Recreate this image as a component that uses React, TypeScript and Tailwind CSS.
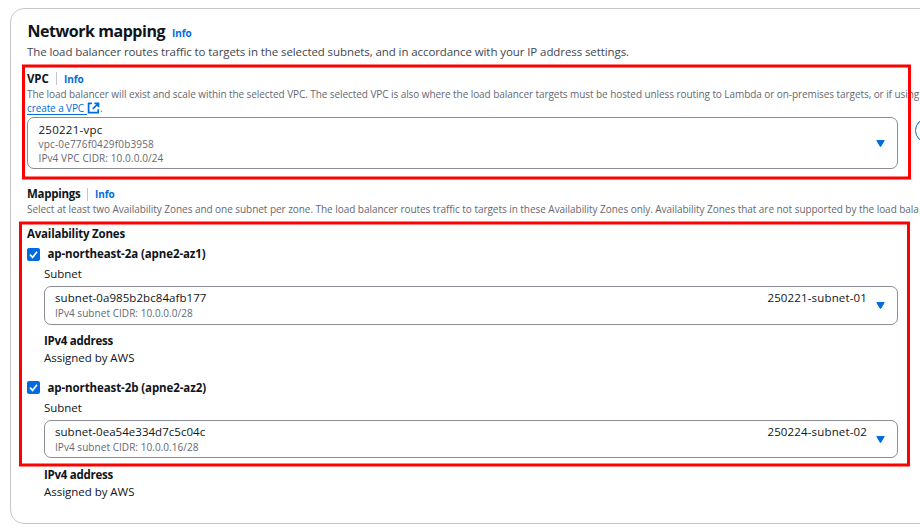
import type { ReactNode } from "react";

function Line({ h, className = "", children }: { h: string; className?: string; children: ReactNode }) {
  return <div className={`flex whitespace-nowrap ${h} ${className}`}>{children}</div>;
}

function Caret({ className = "" }: { className?: string }) {
  return (
    <svg className={`w-[9px] h-[7px] shrink-0 ${className}`} viewBox="0 0 9 7">
      <path d="M0.8 0.5h7.4L4.8 6.3h-0.6z" fill="#006ce0" stroke="#006ce0" strokeWidth="1" strokeLinejoin="round" />
    </svg>
  );
}

function Check({ className }: { className: string }) {
  return (
    <span className={`h-[13px] w-[13px] shrink-0 rounded-[2px] bg-[#006ce0] ${className}`}>
      <svg viewBox="0 0 13 13" className="h-[13px] w-[13px]">
        <path d="M3 6.6l2.6 2.8L10 3.8" fill="none" stroke="#fff" strokeWidth="1.7" />
      </svg>
    </span>
  );
}

function Info({ className = "" }: { className?: string }) {
  return (
    <span className={`text-[10px] font-bold tracking-[-0.1px] text-[#006ce0] ${className}`}>Info</span>
  );
}

function Highlight({ className }: { className: string }) {
  return (
    <div
      className={`pointer-events-none absolute border-x-[3px] border-y-2 border-[#ff0000] shadow-[0_1px_0_#ff000080,0_-1px_0_#ff000080,inset_0_1px_0_#ff000080,inset_0_-1px_0_#ff000080] ${className}`}
    />
  );
}

interface ZoneProps {
  name: string;
  subnet: string;
  cidr: string;
  label: string;
  check: string;
  box: string;
  subnetTracking: string;
}

function Zone({ name, subnet, cidr, label, check, box, subnetTracking }: ZoneProps) {
  return (
    <div>
      <Line h="h-[20px]">
        <Check className={check} />
        <span className="ml-[7.5px] text-[11.5px] leading-[14px] font-bold tracking-[-0.1px]">{name}</span>
      </Line>
      <div className="ml-[17px]">
        <Line h="h-[19px]" className="text-[11.5px] leading-[13px] tracking-[-0.02px]">Subnet</Line>
        <div className={`flex w-[854px] justify-between rounded-[7px] border border-[#8c8c94] ${box}`}>
          <div className="pt-[3px] pl-[10px]">
            <Line h="h-[15px]" className={`text-[11.5px] leading-[16px] ${subnetTracking}`}>{subnet}</Line>
            <Line h="h-[15px]" className="text-[10px] leading-[16px] tracking-[0.05px] text-[#656871]">{cidr}</Line>
          </div>
          <div className="flex pr-[12px]">
            <span className="pt-[3px] text-[11.5px] leading-[16px] tracking-[0.15px]">{label}</span>
            <Caret className="mt-[15px] ml-[9px]" />
          </div>
        </div>
        <Line h="h-[17px]" className="pt-[8px] box-content text-[11.5px] leading-[16px] font-bold tracking-[-0.26px]">IPv4 address</Line>
        <Line h="h-[17px]" className="text-[11.5px] leading-[16px] tracking-[-0.03px]">Assigned by AWS</Line>
      </div>
    </div>
  );
}

export default function App() {
  return (
    <div className="relative h-[529px] w-[920px] overflow-hidden bg-white pt-[8px] pl-[10px] font-['Open_Sans','Noto_Sans',sans-serif] text-[11.5px] text-[#0f141a]">
      <main className="h-[516px] w-[960px] rounded-[14px] border border-[#c6c6cd] pt-[10px] pl-[16px]">
        <Line h="h-[24px]" className="items-baseline">
          <h2 className="ml-[0.5px] text-[16px] leading-[24px] font-bold tracking-[-0.46px]">Network mapping</h2>
          <Info className="ml-[7px]" />
        </Line>
        <Line h="h-[27px]" className="leading-[17px] tracking-[-0.088px] text-[#424650]">
          The load balancer routes traffic to targets in the selected subnets, and in accordance with your IP address settings.
        </Line>
        <Line h="h-[17px]">
          <span className="w-[22px] leading-[17px] font-bold tracking-[-0.15px]">VPC</span>
          <span className="mt-[2px] ml-[7px] h-[13px] w-px bg-[#c6c6cd]" />
          <Info className="ml-[7px] leading-[18px]" />
        </Line>
        <Line h="h-[14px]" className="text-[10px] leading-[14px] tracking-[-0.073px] text-[#656871]">
          The load balancer will exist and scale within the selected VPC. The selected VPC is also where the load balancer targets must be hosted unless routing to Lambda or on-premises targets, or if using
        </Line>
        <Line h="h-[16px]" className="text-[10px] leading-[14px] text-[#656871]">
          <a className="flex h-[14px] w-[60px] border-b border-[#006ce0] tracking-[-0.1px] text-[#006ce0]">create a VPC</a>
          <svg className="mt-[1px] h-[12px] w-[13px]" viewBox="0 0 13 12" fill="none" stroke="#006ce0" strokeWidth="1.7">
            <path d="M5 1.3H1.6v9.4h9.6V7.2M7.4 1.3h4.1v4M11.2 1.5L5.8 6.8" />
          </svg>
          <span>.</span>
        </Line>
        <div className="flex">
          <div className="flex h-[52px] w-[871px] justify-between rounded-[7px] border border-[#8c8c94] pt-[3px] pr-[12px] pl-[10.5px]">
            <div>
              <Line h="h-[16px]" className="leading-[18px] tracking-[0.25px]">250221-vpc</Line>
              <Line h="h-[14px]" className="text-[10px] leading-[15px] tracking-[0.17px] text-[#656871]">vpc-0e776f0429f0b3958</Line>
              <Line h="h-[14px]" className="text-[10px] leading-[15px] tracking-[0.1px] text-[#656871]">IPv4 VPC CIDR: 10.0.0.0/24</Line>
            </div>
            <Caret className="mt-[19px]" />
          </div>
          <span className="mt-[1px] ml-[17px] h-[25px] w-[40px] rounded-full border-[1.5px] border-[#006ce0]" />
        </div>
        <Line h="h-[18px]" className="mt-[17px]">
          <span className="w-[54px] leading-[16px] font-bold tracking-[-0.26px]">Mappings</span>
          <span className="mt-[2px] ml-[6px] h-[13px] w-px bg-[#c6c6cd]" />
          <Info className="ml-[7px] leading-[17px]" />
        </Line>
        <Line h="h-[22px]" className="text-[10px] leading-[11px] tracking-[-0.045px] text-[#656871]">
          Select at least two Availability Zones and one subnet per zone. The load balancer routes traffic to targets in these Availability Zones only. Availability Zones that are not supported by the load bala
        </Line>
        <Line h="h-[21px]" className="leading-[16px] font-bold tracking-[-0.2px]">Availability Zones</Line>
        <Zone
          name="ap-northeast-2a (apne2-az1)"
          subnet="subnet-0a985b2bc84afb177"
          subnetTracking="tracking-[0.065px]"
          cidr="IPv4 subnet CIDR: 10.0.0.0/28"
          label="250221-subnet-01"
          check="mt-[1px]"
          box="h-[39px]"
        />
        <div className="h-[14px]" />
        <Zone
          name="ap-northeast-2b (apne2-az2)"
          subnet="subnet-0ea54e334d7c5c04c"
          subnetTracking="tracking-[0.03px]"
          cidr="IPv4 subnet CIDR: 10.0.0.16/28"
          label="250224-subnet-02"
          check="mt-0"
          box="mb-[1px] h-[38px]"
        />
      </main>
      <Highlight className="top-[65px] left-[22px] h-[114px] w-[889px]" />
      <Highlight className="top-[222px] left-[19px] h-[244px] w-[891px]" />
    </div>
  );
}
